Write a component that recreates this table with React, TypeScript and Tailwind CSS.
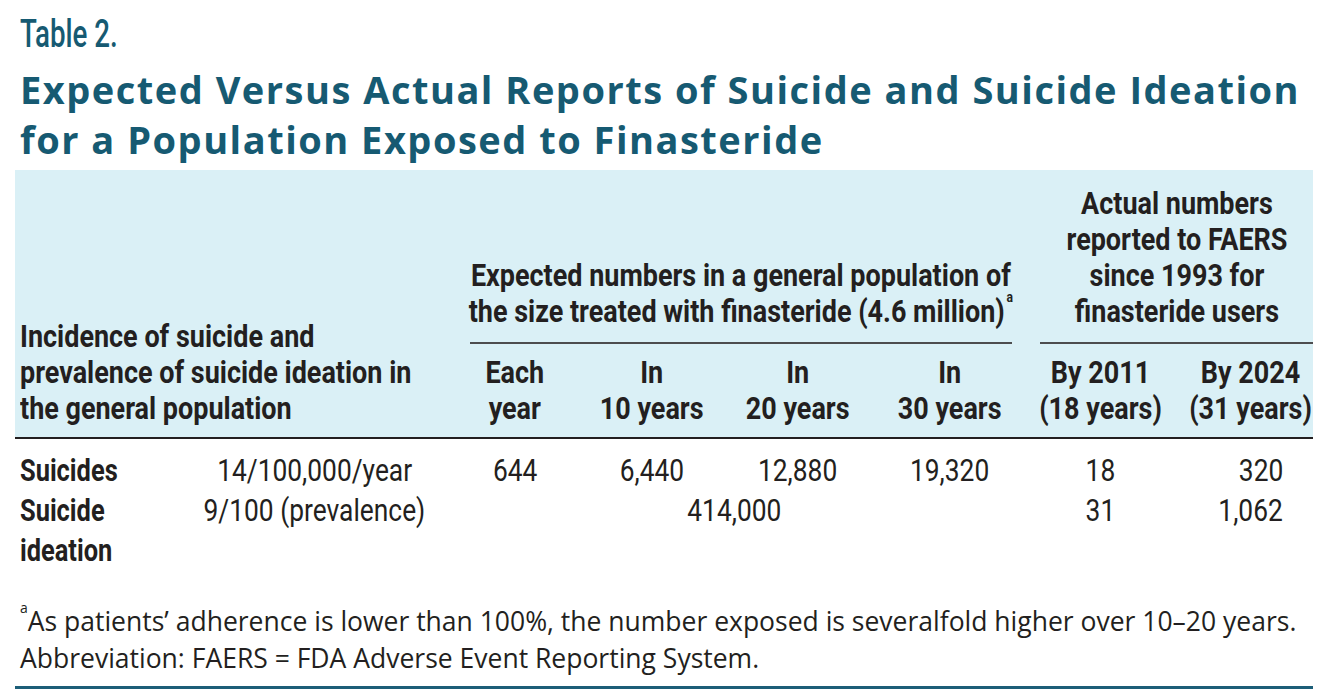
import React from "react";

const rob = "font-['Roboto',sans-serif]";
const hdr = "inline-block whitespace-nowrap scale-x-[0.87]";
const dat = "inline-block whitespace-nowrap scale-x-[0.85]";

function HC({ children, pl = "", pr = "" }: { children: React.ReactNode; pl?: string; pr?: string }) {
  return (
    <div className={`flex justify-center ${pl} ${pr}`}>
      <span className={`${hdr} origin-center text-center`}>{children}</span>
    </div>
  );
}

function DC({ children }: { children: React.ReactNode }) {
  return (
    <div className="flex justify-center">
      <span className={`${dat} origin-center`}>{children}</span>
    </div>
  );
}

export default function App() {
  return (
    <div className="w-[1328px] h-[697px] bg-white text-[#231f20] overflow-hidden">
      <div className={`${rob} font-medium text-[39px] leading-[40px] text-[#165a72] pl-[20px] pt-[14px]`}>
        <span className="inline-block whitespace-nowrap scale-x-[0.71] origin-left">Table 2.</span>
      </div>
      <h1 className="font-['Open_Sans',sans-serif] font-bold text-[38px] leading-[50px] tracking-[1.5px] text-[#165a72] pl-[20px] mt-[10px] whitespace-nowrap">
        Expected Versus Actual Reports of Suicide and Suicide Ideation
        <br />
        for a Population Exposed to Finasteride
      </h1>
      <div className="px-[15px] pt-[6px]">
        <table className="w-[1298px] table-fixed border-collapse">
          <colgroup>
            <col className="w-[185px]" />
            <col className="w-[245px]" />
            <col className="w-[140px]" />
            <col className="w-[134px]" />
            <col className="w-[158px]" />
            <col className="w-[146px]" />
            <col className="w-[154px]" />
            <col className="w-[136px]" />
          </colgroup>
          <thead className={`${rob} font-bold text-[31px] leading-[36px] bg-[#daf0f6]`}>
            <tr>
              <th colSpan={2} rowSpan={2} className="align-bottom text-left font-bold pl-[5px] pb-[10px] p-0">
                <span className={`${hdr} origin-left`}>
                  Incidence of suicide and
                  <br />
                  prevalence of suicide ideation in
                  <br />
                  the general population
                </span>
              </th>
              <th colSpan={4} className="align-bottom font-bold pl-[25px] pr-[11px] p-0">
                <div className="border-b-2 border-[#4d4d4f] pb-[12px]">
                  <HC>
                    Expected numbers in a general population of
                    <br />
                    the size treated with finasteride (4.6 million)
                    <sup className="text-[14px] leading-none align-[13px] font-bold ml-[2px]">a</sup>
                  </HC>
                </div>
              </th>
              <th colSpan={2} className="align-bottom font-bold pl-[17px] pt-[16px]">
                <div className="border-b-2 border-[#4d4d4f] pb-[12px]">
                  <HC>
                    Actual numbers
                    <br />
                    reported to FAERS
                    <br />
                    since 1993 for
                    <br />
                    finasteride users
                  </HC>
                </div>
              </th>
            </tr>
            <tr className="border-b-2 border-[#231f20]">
              {[
                ["Each", "year", ""],
                ["In", "10 years", ""],
                ["In", "20 years", ""],
                ["In", "30 years", ""],
                ["By 2011", "(18 years)", ""],
                ["By 2024", "(31 years)", "pl-[10px]"],
              ].map(([a, b, pl], i) => (
                <th key={i} className="font-bold pt-[11px] pb-[10px]">
                  <HC pl={pl}>
                    {a}
                    <br />
                    {b}
                  </HC>
                </th>
              ))}
            </tr>
          </thead>
          <tbody className={`${rob} text-[31px] leading-[40px]`}>
            <tr>
              <td className="font-bold pl-[5px] pt-[12px] align-top">
                <span className="inline-block whitespace-nowrap scale-x-[0.82] origin-left">Suicides</span>
              </td>
              <td className="pt-[12px] pr-[16px] align-top"><DC>14/100,000/year</DC></td>
              <td className="pt-[12px] align-top"><DC>644</DC></td>
              <td className="pt-[12px] align-top"><DC>6,440</DC></td>
              <td className="pt-[12px] align-top"><DC>12,880</DC></td>
              <td className="pt-[12px] align-top"><DC>19,320</DC></td>
              <td className="pt-[12px] align-top"><DC>18</DC></td>
              <td className="pt-[12px] pr-[30px] align-top text-right">
                <span className={`${dat} origin-right`}>320</span>
              </td>
            </tr>
            <tr>
              <td className="font-bold pl-[5px] align-top leading-[40px]">
                <span className="inline-block whitespace-nowrap scale-x-[0.82] origin-left">
                  Suicide
                  <br />
                  ideation
                </span>
              </td>
              <td className="pr-[16px] align-top"><DC>9/100 (prevalence)</DC></td>
              <td colSpan={4} className="align-top"><DC>414,000</DC></td>
              <td className="align-top"><DC>31</DC></td>
              <td className="pr-[30px] align-top text-right">
                <span className={`${dat} origin-right`}>1,062</span>
              </td>
            </tr>
          </tbody>
        </table>
        <div className="font-['Open_Sans',sans-serif] text-[26.5px] leading-[37px] mt-[32px] pl-[5px] pb-[9px] border-b-[3px] border-[#1c5e78] whitespace-nowrap">
          <sup className="text-[14px] leading-none align-[11px]">a</sup>As patients’ adherence is lower than 100%, the number exposed is severalfold higher over 10–20 years.
          <br />
          Abbreviation: FAERS = FDA Adverse Event Reporting System.
        </div>
      </div>
    </div>
  );
}
